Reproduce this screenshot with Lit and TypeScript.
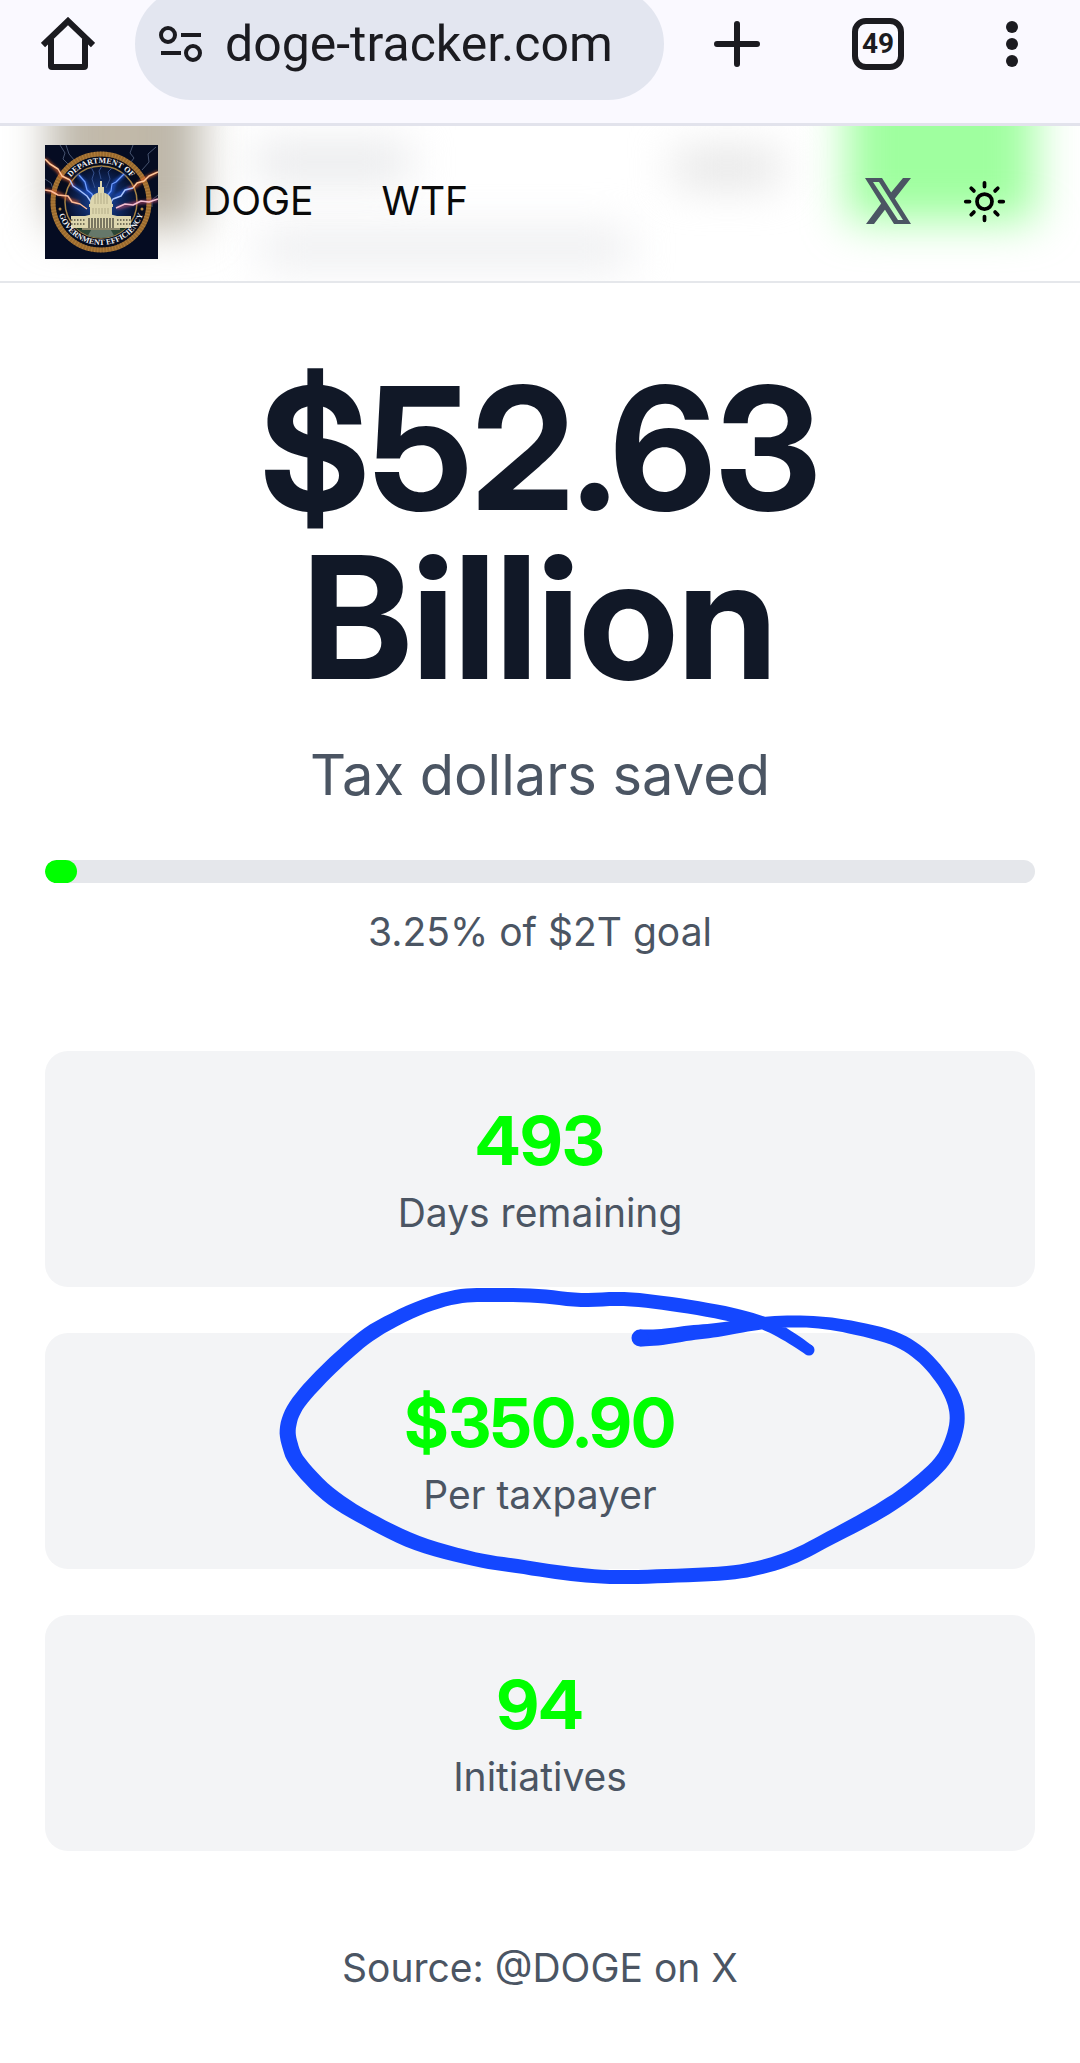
import { LitElement, html, svg, css } from "lit";
import { customElement, property } from "lit/decorators.js";

type PenPoint = [x: number, y: number, width: number];

const PEN_STROKE: PenPoint[] = [
  [640, 1338, 17], [662, 1337, 16], [690, 1333, 15], [717, 1330, 14], [742, 1326, 13],
  [775, 1322, 12], [813, 1322, 12], [850, 1327, 13], [893, 1338, 14], [920, 1354, 14],
  [941, 1377, 14], [954, 1400, 15], [957, 1422, 15], [950, 1447, 15], [937, 1467, 15],
  [907, 1493, 15], [873, 1515, 15], [830, 1538, 14], [795, 1556, 14], [762, 1567, 14],
  [727, 1573, 14], [667, 1576, 14], [610, 1577, 14], [564, 1573, 14], [517, 1566, 14],
  [474, 1559, 14], [417, 1543, 15], [367, 1519, 15], [328, 1494, 16], [299, 1464, 16],
  [290, 1445, 16], [288, 1427, 16], [296, 1406, 15], [317, 1381, 15], [345, 1354, 15],
  [374, 1331, 15], [417, 1309, 14], [456, 1297, 14], [489, 1295, 14], [538, 1296, 14],
  [581, 1300, 14], [624, 1299, 14], [671, 1304, 14], [724, 1313, 14], [763, 1323, 13],
  [788, 1336, 12], [809, 1350, 11],
];

const spline = (a: number, b: number, c: number, d: number, t: number) =>
  0.5 * (2 * b + (c - a) * t + (2 * a - 5 * b + 4 * c - d) * t * t + (3 * b - a - 3 * c + d) * t * t * t);

/** Turns centre points with widths into the outline of one pen stroke. */
function penOutline(points: PenPoint[]): string {
  const samples: PenPoint[] = [];
  const at = (i: number) => points[Math.max(0, Math.min(points.length - 1, i))];
  for (let i = 0; i < points.length - 1; i++) {
    for (let s = 0; s < 6; s++) {
      const [p, q, r, u] = [at(i - 1), at(i), at(i + 1), at(i + 2)];
      samples.push([0, 1, 2].map((k) => spline(p[k], q[k], r[k], u[k], s / 6)) as PenPoint);
    }
  }
  samples.push(points[points.length - 1]);
  const left: string[] = [];
  const right: string[] = [];
  samples.forEach(([x, y, w], i) => {
    const a = samples[Math.max(0, i - 1)];
    const b = samples[Math.min(samples.length - 1, i + 1)];
    const len = Math.hypot(b[0] - a[0], b[1] - a[1]) || 1;
    const nx = (-(b[1] - a[1]) / len) * (w / 2);
    const ny = ((b[0] - a[0]) / len) * (w / 2);
    left.push(`${(x + nx).toFixed(1)} ${(y + ny).toFixed(1)}`);
    right.unshift(`${(x - nx).toFixed(1)} ${(y - ny).toFixed(1)}`);
  });
  return `M${left.join("L")}L${right.join("L")}Z`;
}

@customElement("browser-bar")
export class BrowserBar extends LitElement {
  @property() address = "";
  @property({ type: Number }) tabs = 0;

  static styles = css`
    :host {
      display: flex;
      height: 123px;
      overflow: hidden;
      background: #faf9ff;
      border-bottom: 3px solid #e2e3ec;
      color: #1b1b20;
      font-family: Roboto, "Liberation Sans", sans-serif;
    }
    button {
      display: flex;
      align-items: center;
      justify-content: center;
      height: 88px;
      padding: 0;
      border: 0;
      background: none;
      color: inherit;
      font: inherit;
    }
    .home { width: 135px; }
    .add { width: 146px; }
    .switcher { width: 136px; }
    .more { width: 132px; margin-right: 2px; }
    .pill {
      display: flex;
      flex: 1;
      align-items: center;
      min-width: 0;
      height: 112px;
      margin-top: -12px;
      padding: 0 24px;
      box-sizing: border-box;
      border-radius: 56px;
      background: #e3e6f0;
      gap: 22px;
    }
    .address {
      flex: 1;
      min-width: 0;
      padding: 0;
      border: 0;
      outline: 0;
      background: none;
      color: inherit;
      font: 400 50px/60px Roboto, "Liberation Sans", sans-serif;
    }
    .count {
      display: flex;
      align-items: center;
      justify-content: center;
      width: 52px;
      height: 52px;
      box-sizing: border-box;
      border: 6px solid;
      border-radius: 14px;
      font-size: 28px;
      font-weight: 700;
    }
    svg { display: block; fill: none; stroke: currentColor; }
    .dots { fill: currentColor; stroke: none; }
  `;

  render() {
    return html`
      <button class="home" aria-label="Home">
        <svg width="54" height="54" viewBox="0 0 54 54" stroke-width="6" stroke-linejoin="round">
          <path d="M2 28 27 4l25 24" stroke-linejoin="miter" />
          <path d="M10 22v27q0 1 1 1h32q1 0 1-1V22" />
        </svg>
      </button>
      <div class="pill">
        <button aria-label="Site settings">
          <svg width="44" height="40" viewBox="0 0 44 40" stroke-width="4">
            <circle cx="9" cy="11" r="7" /><path d="M22 11h20M2 29h20" /><circle cx="34" cy="29" r="7" />
          </svg>
        </button>
        <input class="address" aria-label="Address" .value=${this.address} />
      </div>
      <button class="add" aria-label="New tab">
        <svg width="46" height="46" viewBox="0 0 46 46" stroke-width="6" stroke-linecap="round">
          <path d="M23 3v40M3 23h40" />
        </svg>
      </button>
      <button class="switcher" aria-label="Switch tabs"><span class="count">${this.tabs}</span></button>
      <button class="more" aria-label="More">
        <svg class="dots" width="12" height="48" viewBox="0 0 12 48">
          <circle cx="6" cy="7" r="6" /><circle cx="6" cy="24" r="6" /><circle cx="6" cy="41" r="6" />
        </svg>
      </button>
    `;
  }
}

@customElement("doge-seal")
export class DogeSeal extends LitElement {
  static styles = css`
    :host { display: block; width: 113px; height: 114px; }
    svg { display: block; width: 100%; height: 100%; }
    .motto { font: 700 8px "Liberation Serif", serif; fill: #f0f1f5; }
  `;

  render() {
    const windows = Array.from({ length: 9 }, (_, i) => 42 + i * 3);
    return html`
      <svg viewBox="0 0 113 114" role="img" aria-label="Department of Government Efficiency">
        <defs>
          <radialGradient id="sky"><stop offset="0" stop-color="#2456b8" /><stop offset=".5" stop-color="#102b66" /><stop offset="1" stop-color="#060f2a" /></radialGradient>
          <filter id="glow" x="-30%" y="-30%" width="160%" height="160%"><feGaussianBlur stdDeviation="1.500" /></filter>
          <path id="arc-top" d="M17 57a39 39 0 0 1 78 0" />
          <path id="arc-bottom" d="M12 56a44 44 0 0 0 88 0" />
          <clipPath id="disc"><circle cx="56" cy="57" r="36" /></clipPath>
        </defs>
        <rect width="113" height="114" fill="#050c22" />
        <g fill="none" stroke="#46536f" stroke-width="1">
          <path d="M15 0l5 8-2 6 9 9M21 0l3 9 6 7M88 0l-3 8 4 5-6 8M111 2l-8 7 1 8-7 8M0 34l6 4 2 6M113 50l-6 5v7" />
        </g>
        <circle cx="56" cy="57" r="48" fill="#060b1c" stroke="#9a6a2e" stroke-width="5" />
        <circle cx="56" cy="57" r="48" fill="none" stroke="#c8924a" stroke-width="5" stroke-dasharray="1 2" opacity=".5" />
        <circle cx="56" cy="57" r="36" fill="url(#sky)" stroke="#a58346" stroke-width="1.500" />
        <g clip-path="url(#disc)">
          <g fill="none" stroke="#35508c" stroke-width="1"><path d="M50 43l-3-9 2-6-4-8M61 43l4-9-2-7 6-6M56 34l-2-8 3-5" /></g>
          <path d="M20 86c10-8 20-10 36-10s26 2 36 10v12H20z" fill="#2c4635" />
          <path d="M50 78h12l10 18H40z" fill="#66786a" />
          <path d="M24 84c8-3 14-1 20-2M88 84c-8-3-14-1-20-2" fill="none" stroke="#1c3422" stroke-width="4" />
        </g>
        <g fill="none" filter="url(#glow)" stroke-width="3" opacity=".8">
          <path d="M0 14l13 12 4 6 8 3 3 6" stroke="#e8642c" />
          <path d="M0 45l13 3 12 7 9 3" stroke="#d0582d" />
          <path d="M113 27l-14 7-8 7-10 4" stroke="#e8642c" />
          <path d="M113 55l-13 2-10 1-10 3-8 2" stroke="#b04a6a" />
          <path d="M32 29l8 8 3 9 6 8M80 29l-10 8-3 9-8 8M28 41l14 9M84 43l-14 9" stroke="#2458d8" />
        </g>
        <g fill="none" stroke-linejoin="round">
          <path d="M0 14l5 5 8 5 4 7 8 4" stroke="#ffc79a" stroke-width="1.500" />
          <path d="M25 35l3 6 6 4 8 6 4 6" stroke="#a9c4ff" stroke-width="1.400" />
          <path d="M0 45l6 1 7 4 10 1 4 6 8 2 7 5" stroke="#ffbd98" stroke-width="1.500" />
          <path d="M113 27l-9 4-5 5-7 2-4 5" stroke="#ffc79a" stroke-width="1.500" />
          <path d="M88 43l-8 2-4 6-8 3-3 5" stroke="#a9c4ff" stroke-width="1.400" />
          <path d="M113 54l-9 3-8-1-8 4-8-1-9 4" stroke="#f4bfd0" stroke-width="1.400" />
          <path d="M34 30l6 7 2 8 5 4 2 6M79 29l-8 8-4 2-1 7-5 6" stroke="#6f9dff" stroke-width="1.200" />
        </g>
        <g fill="#ddd6ae">
          <path d="M55 36h2v7h-2zM53 42h6v6h-6z" />
          <path d="M45 59c0-8 4-11 11-12 7 1 11 4 11 12z" />
          <path d="M44 59h24v3H44zM45 62h22v8H45z" />
          <path d="M26 71h60v12H26zM40 71l16-4 16 4z" />
        </g>
        <path d="M50 49v10M53 48v11M56 48v11M59 48v11M62 49v10M48 63v6M51 63v6M54 63v6M57 63v6M60 63v6M63 63v6" stroke="#a19b79" stroke-width=".7" />
        <path d="M26 75h14M72 75h14M26 79h14M72 79h14" stroke="#77735c" stroke-width="2" stroke-dasharray="1.500 1.500" />
        ${windows.map((x) => svg`<path d="M${x + 2} 73v10" stroke="#4f4c3f" stroke-width="1.400" />`)}
        <path d="M37 83h38v2H37z" fill="#8b876c" />
        <g fill="#b98b45"><circle cx="15" cy="64" r="1.500" /><circle cx="97" cy="64" r="1.500" /></g>
        <text class="motto" text-anchor="middle"><textPath href="#arc-top" startOffset="50%">DEPARTMENT OF</textPath></text>
        <text class="motto" text-anchor="middle"><textPath href="#arc-bottom" startOffset="50%">GOVERNMENT EFFICIENCY</textPath></text>
      </svg>
    `;
  }
}

@customElement("site-header")
export class SiteHeader extends LitElement {
  static styles = css`
    :host {
      display: flex;
      position: relative;
      align-items: center;
      padding: 19px 45px 22px;
      overflow: hidden;
      border-bottom: 2px solid #e5e7eb;
      background: #fff;
    }
    .shade { position: absolute; filter: blur(22px); }
    .seal-shade { top: -60px; left: 50px; width: 150px; height: 162px; background: linear-gradient(90deg, #bab6ac, #c5bba9 45%, #b6b2a7); }
    .title-shade { top: 18px; left: 255px; width: 155px; height: 36px; background: #e6e7e9; }
    .text-shade { top: 104px; left: 260px; width: 370px; height: 36px; background: #ecedef; }
    .date-shade { top: 26px; left: 675px; width: 105px; height: 32px; background: #e0e0e0; }
    .button-shade { top: -60px; right: 45px; width: 188px; height: 155px; background: #9fff9f; }
    nav, doge-seal, .actions { position: relative; }
    nav, .actions { display: flex; align-items: center; padding-bottom: 2px; }
    nav { gap: 68px; margin-left: 45px; }
    nav a { color: #0a0a0a; font: 400 39px/56px Inter, sans-serif; text-decoration: none; }
    .actions { gap: 23px; margin-left: auto; }
    .actions a { color: #4b5563; }
    .theme { padding: 28px; border: 0; background: none; color: #000; }
    svg { display: block; }
  `;

  render() {
    return html`
      <div class="shade seal-shade"></div>
      <div class="shade title-shade"></div>
      <div class="shade text-shade"></div>
      <div class="shade date-shade"></div>
      <div class="shade button-shade"></div>
      <doge-seal></doge-seal>
      <nav><a href="#doge">DOGE</a><a href="#wtf">WTF</a></nav>
      <div class="actions">
        <a href="#x" aria-label="X">
          <svg width="46" height="46" viewBox="0 0 46 46" fill="currentColor" fill-rule="evenodd">
            <path d="M0 0H17L46 46H29ZM8 4 33 42H38L14 4Z" />
            <path d="M38 0h8L28 23l-4-6ZM1 46h8L22 29l-4-6Z" />
          </svg>
        </a>
        <button class="theme" aria-label="Toggle theme">
          <svg width="45" height="45" viewBox="0 0 24 24" fill="none" stroke="currentColor" stroke-width="2" stroke-linecap="round">
            <circle cx="12" cy="12" r="4" />
            <path d="M12 2v2M12 20v2M4.930 4.930l1.410 1.410M17.660 17.660l1.410 1.410M2 12h2M20 12h2M6.340 17.660l-1.410 1.410M19.070 4.930l-1.410 1.410" />
          </svg>
        </button>
      </div>
    `;
  }
}

interface Stat { value: string; label: string; circled?: boolean }

@customElement("app-root")
export class AppRoot extends LitElement {
  private percent = 3.25;
  private stats: Stat[] = [
    { value: "493", label: "Days remaining" },
    { value: "$350.90", label: "Per taxpayer", circled: true },
    { value: "94", label: "Initiatives" },
  ];

  static styles = css`
    :host {
      display: block;
      min-height: 100vh;
      overflow: hidden;
      background: #fff;
      color: #4b5563;
      font: 400 39px/56px Inter, sans-serif;
      text-align: center;
    }
    main { display: flex; flex-direction: column; padding: 81px 45px 67px; }
    h1, p { margin: 0; }
    h1, .value { font-family: "Inter Display", Inter, sans-serif; font-weight: 700; }
    h1 { color: #111827; font-size: 170px; line-height: 169px; }
    .caption { margin-top: 34px; font-size: 56px; line-height: 79px; }
    .track { height: 23px; margin-top: 45px; overflow: hidden; border-radius: 12px; background: #e5e7eb; }
    .fill { height: 100%; border-radius: 12px; background: #00ff00; }
    .goal { margin-top: 21px; }
    .stats { display: flex; flex-direction: column; gap: 46px; margin-top: 91px; }
    .card { position: relative; padding: 44px 45px 46px; border-radius: 23px; background: #f3f4f6; }
    .value { color: #00ff00; font-size: 68px; line-height: 90px; }
    .pen { position: absolute; inset: 0; z-index: 1; width: 100%; height: 100%; overflow: visible; pointer-events: none; fill: #1447ff; }
    .source { margin-top: 89px; }
  `;

  render() {
    const first = PEN_STROKE[0];
    const last = PEN_STROKE[PEN_STROKE.length - 1];
    return html`
      <browser-bar address="doge-tracker.com" .tabs=${49}></browser-bar>
      <site-header></site-header>
      <main>
        <h1>$52.63 Billion</h1>
        <p class="caption">Tax dollars saved</p>
        <div class="track" role="progressbar" aria-valuenow=${this.percent} aria-label="Goal progress">
          <div class="fill" style="width:${this.percent}%"></div>
        </div>
        <p class="goal">${this.percent}% of $2T goal</p>
        <section class="stats">
          ${this.stats.map((s) => html`
            <div class="card">
              <p class="value">${s.value}</p>
              <p>${s.label}</p>
              ${s.circled
                ? html`<svg class="pen" viewBox="45 1333 990 236" aria-hidden="true">
                    <path d=${penOutline(PEN_STROKE)} />
                    <circle cx=${first[0]} cy=${first[1]} r=${first[2] / 2} />
                    <circle cx=${last[0]} cy=${last[1]} r=${last[2] / 2} />
                  </svg>`
                : null}
            </div>`)}
        </section>
        <p class="source">Source: @DOGE on X</p>
      </main>
    `;
  }
}
